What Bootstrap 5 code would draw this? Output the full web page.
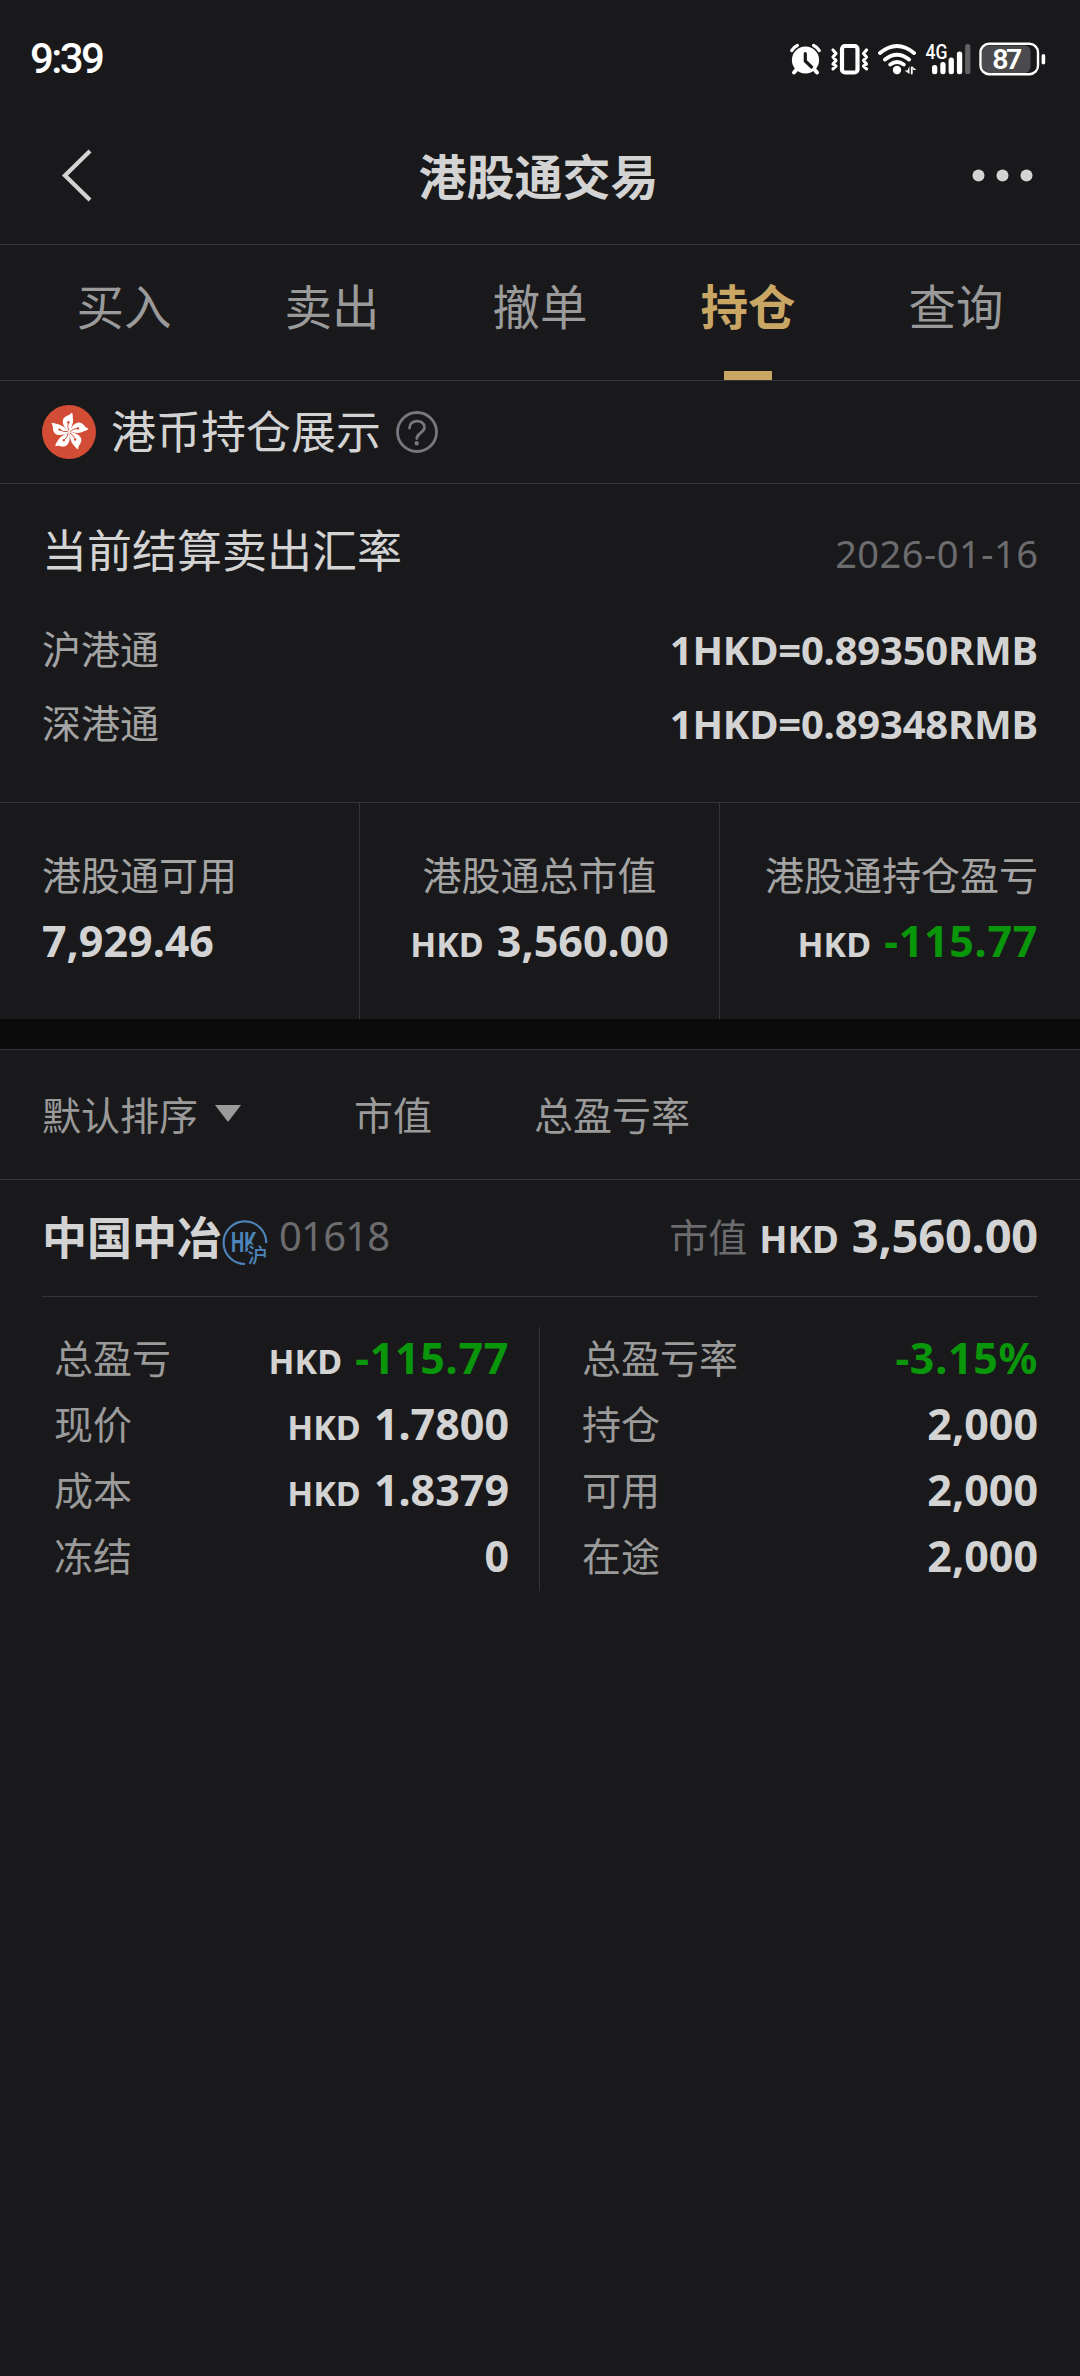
<!DOCTYPE html>
<html lang="zh-CN" data-bs-theme="dark">
<head>
<meta charset="utf-8">
<meta name="viewport" content="width=device-width, initial-scale=1">
<title>港股通交易</title>
<link href="https://cdn.jsdelivr.net/npm/bootstrap@5.3.0/dist/css/bootstrap.min.css" rel="stylesheet">
<style>
:root{--ink:#d3d3d3;--soft:#a3a4a3;--dim:#9a9a9a;--faint:#6c6c6e;--gold:#c9a664;--down:#0a960a;--rule:#343436}
body{background:#19191b;color:var(--ink);font-family:"Noto Sans CJK SC",sans-serif;font-size:39px;line-height:50px;white-space:nowrap}
h1,h2,h3{color:var(--ink)}
svg{display:block;flex:none}
.rule-b{border-bottom:1px solid var(--rule)}
.rule-t{border-top:1px solid var(--rule)}
.rule-r{border-right:1px solid var(--rule)}
.edge{padding-left:42px;padding-right:42px}
.soft{color:var(--soft)} .dim{color:var(--dim)} .faint{color:var(--faint)} .down{color:var(--down)}
.num{font-family:"Noto Sans","Noto Sans CJK SC",sans-serif;font-weight:700;font-size:43px;line-height:60px}
.num small{font-size:34px;font-weight:700;line-height:1;margin-right:2px}
.down{letter-spacing:.7px}

.status-bar{height:104px;padding:29px 34px 0 30px}
.clock{font-family:Roboto,sans-serif;font-weight:500;font-size:42px;letter-spacing:-2.6px;color:#fff;line-height:60px}
.status-icons{height:40px;margin-top:11px}

.title-bar{height:141px;padding:0 47px 0 60px}
.title-bar svg{margin-top:2px}
.title-bar .side{width:70px}
.title-bar h1{font-size:48px;font-weight:700;line-height:60px;padding-left:13px}

.tabs{height:136px;padding:30px 20px 0}
.tabs a{font-size:47.5px;line-height:60px;color:var(--dim);text-decoration:none}
.tabs a.active{color:var(--gold);font-weight:700}
.tabs a.active::after{content:"";width:48px;height:9px;margin-top:36px;background:var(--gold)}

.mode{height:103px}
.mode span{font-size:45px;margin:0 15px 0 15px;padding-bottom:5px}

.rates{height:319px;padding-top:35px}
.rates h2{font-size:45px;font-weight:400;line-height:60px}
.rates .date{font-family:"Noto Sans",sans-serif;font-size:38px;letter-spacing:.5px;padding-top:8px;margin-right:-.5px}
.rate-list{margin-top:31px}
.rate-list>div{height:74px}
.rate-list .num{font-size:40px;letter-spacing:-.2px;padding-top:5px}

.totals{height:216px}
.totals>div{width:360px;padding-top:45px}
.totals .num{margin-top:13px}

.band{height:30px;background:#0b0b0b}
.sorts{height:131px;padding-bottom:3px}
.sorts>div:nth-child(1){width:312px}
.sorts>div:nth-child(2){width:180px}
.caret{margin-left:17px}

.stock{margin:0 42px}
.stock-head{height:117px;padding-bottom:7px}
.stock-head h3{font-size:45px;font-weight:700;line-height:60px;padding-top:2px}
.stock-head .hk{margin-top:21px}
.stock-head .code{font-family:"Noto Sans",sans-serif;font-size:40px;letter-spacing:-.8px;margin-left:11px;padding-top:2px}
.stock-head .num{font-size:47px;letter-spacing:-.2px;padding-top:1px}
.stock-head .num small{font-size:37px;margin-right:1px}
.stock-head .cap{margin-right:12px}
.halves{margin-top:30px}
.grid-half{width:498px}
.grid-half>div{height:66px}
.grid-half>div>span:first-child{padding-bottom:9px}
.grid-half .num{padding-bottom:5px}
.half-l{padding:0 30px 0 12px}
.half-r{padding-left:42px}
</style>
</head>
<body>
<div class="status-bar d-flex justify-content-between align-items-start">
  <div class="clock">9:39</div>
  <div class="status-icons d-flex" aria-hidden="true">
    <svg width="40" height="40" viewBox="786 40 40 40" fill="none" stroke="#fff" stroke-linecap="round">
      <circle cx="805.5" cy="60" r="13.6" fill="#fff" stroke="none"/>
      <path d="M791.8 50.5q2-3.5 5.5-5M819.2 50.5q-2-3.5-5.5-5" stroke-width="3.4"/>
      <path d="M797 69l-3 3.500M814 69l3 3.500" stroke-width="4"/>
      <path d="M805.300 53.500v7.500l6.200 6" stroke="#19191b" stroke-width="3.200"/>
    </svg>
    <svg width="48" height="40" viewBox="826 40 48 40" fill="none" stroke="#fff" stroke-linecap="round" stroke-linejoin="round">
      <rect x="842" y="46" width="15.500" height="26.500" rx="3" stroke-width="4.200"/>
      <path d="M833 50l3 3.500-3 3.500 3 3.500-3 3.500 3 2-3 2.800M866.500 50l-3 3.500 3 3.500-3 3.500 3 3.500-3 2 3 2.800" stroke-width="3.200"/>
    </svg>
    <svg width="46" height="40" viewBox="874 40 46 40" fill="none" stroke="#fff" stroke-linecap="round">
      <circle cx="897" cy="70" r="4.200" fill="#fff" stroke="none"/>
      <path d="M880 53q17-14 34 0M885 59.500q12-9.500 24 0M890.300 64.500q6.700-5 13.400 0" stroke-width="3.900"/>
      <path d="M909.500 66v8l-5-3.500h3zM911.500 66l5 4h-3" fill="#fff" stroke="none"/>
      <path d="M911.800 67.500v6" stroke-width="1.800"/>
    </svg>
    <svg width="54" height="40" viewBox="920 40 54 40">
      <text x="925.500" y="59" font-family="Roboto,sans-serif" font-weight="500" font-size="20.500" textLength="22" lengthAdjust="spacingAndGlyphs" fill="#fff">4G</text>
      <g fill="#fff"><rect x="932" y="65" width="5.300" height="9.300" rx="2.500"/><rect x="940.300" y="62" width="5.300" height="12.300" rx="2.500"/><rect x="948.600" y="57.500" width="5.300" height="16.800" rx="2.500"/><rect x="956.900" y="51.500" width="5.300" height="22.800" rx="2.500"/></g>
      <rect x="965.100" y="44" width="5.300" height="30.300" rx="2.500" fill="#626264"/>
    </svg>
    <svg width="72" height="40" viewBox="974 40 72 40">
      <rect x="982" y="45.500" width="48.500" height="27.500" rx="6" fill="#4b4b4d"/>
      <rect x="980.500" y="43.800" width="57.500" height="30.400" rx="8.500" fill="none" stroke="#fff" stroke-width="2.400"/>
      <rect x="1041.600" y="54" width="3.600" height="10.500" rx="1.800" fill="#fff"/>
      <text x="1007.300" y="69" text-anchor="middle" font-family="Roboto,sans-serif" font-weight="600" font-size="28.500" textLength="30" fill="#fff">87</text>
    </svg>
  </div>
</div>

<header class="title-bar rule-b d-flex justify-content-between align-items-center">
  <div class="side"><svg width="34" height="54" viewBox="0 0 34 54" fill="none" stroke="#d3d3d3" stroke-width="4.200"><path d="M30 3L5 27.500 30 52"/></svg></div>
  <h1 class="m-0 ps-0">港股通交易</h1>
  <div class="side ms-3 d-flex justify-content-end"><svg width="62" height="14" viewBox="0 0 62 14" fill="#d3d3d3"><circle cx="7.500" cy="7.500" r="6"/><circle cx="31.500" cy="7.500" r="6"/><circle cx="55.500" cy="7.500" r="6"/></svg></div>
</header>

<nav class="tabs rule-b nav flex-nowrap nav-fill">
  <a class="col d-flex flex-column align-items-center" href="#">买入</a>
  <a class="col d-flex flex-column align-items-center" href="#">卖出</a>
  <a class="col d-flex flex-column align-items-center" href="#">撤单</a>
  <a class="col d-flex flex-column align-items-center active" href="#">持仓</a>
  <a class="col d-flex flex-column align-items-center" href="#">查询</a>
</nav>

<section class="mode edge rule-b d-flex align-items-center">
  <svg width="54" height="54" viewBox="-27 -27 54 54">
    <defs>
      <g id="petal">
        <path d="M0 0C-3.500-3-6.500-7-6.200-11-5.900-15-2.500-16-.5-16.800 1.200-17.500 2-18.500 2.800-19.500 4.300-17.500 3.500-15 4-12.500 4.500-9 2.500-5 0 0z" fill="#fff"/>
        <path d="M0-1.500Q-2-5-.8-9" fill="none" stroke="#d34c36" stroke-width=".9"/>
        <circle cx="-.6" cy="-9.700" r="1.200" fill="#d34c36"/>
      </g>
    </defs>
    <circle r="27" fill="#d34c36"/>
    <use href="#petal"/><use href="#petal" transform="rotate(72)"/><use href="#petal" transform="rotate(144)"/><use href="#petal" transform="rotate(216)"/><use href="#petal" transform="rotate(288)"/>
  </svg>
  <span>港币持仓展示</span>
  <svg width="42" height="42" viewBox="0 0 42 42" fill="none" stroke="#77777f" stroke-width="2.800" stroke-linecap="round"><circle cx="21" cy="21" r="19.500"/><path d="M13.500 17c0-9 15-9 15-.8 0 5.500-7.700 5.800-7.700 11.300"/><circle cx="20.700" cy="32.300" r="1.200" fill="#77777f" stroke-width="2"/></svg>
</section>

<section class="rates edge rule-b">
  <div class="d-flex justify-content-between align-items-center">
    <h2 class="m-0">当前结算卖出汇率</h2>
    <div class="date faint">2026-01-16</div>
  </div>
  <div class="rate-list">
    <div class="d-flex justify-content-between align-items-center"><span class="soft">沪港通</span><span class="num">1HKD=0.89350RMB</span></div>
    <div class="d-flex justify-content-between align-items-center"><span class="soft">深港通</span><span class="num">1HKD=0.89348RMB</span></div>
  </div>
</section>

<section class="totals d-flex">
  <div class="rule-r edge"><div class="soft">港股通可用</div><div class="num">7,929.46</div></div>
  <div class="rule-r text-center"><div class="soft">港股通总市值</div><div class="num"><small>HKD</small> 3,560.00</div></div>
  <div class="edge text-end"><div class="soft">港股通持仓盈亏</div><div class="num"><small>HKD</small> <span class="down">-115.77</span></div></div>
</section>

<div class="band"></div>

<section class="sorts edge rule-t rule-b d-flex align-items-center dim">
  <div class="d-flex align-items-center">默认排序<svg class="caret" width="26" height="17" viewBox="0 0 26 17"><path d="M0 0h26L13 17z" fill="#9a9a9a"/></svg></div>
  <div>市值</div>
  <div>总盈亏率</div>
</section>

<article class="stock">
  <div class="stock-head rule-b d-flex align-items-center">
    <h3 class="m-0">中国中冶</h3>
    <svg class="hk overflow-visible" width="46" height="50" viewBox="0 0 46 50">
      <path d="M23 44A21.300 21.300 0 1 1 44.200 23" fill="none" stroke="#4d84ba" stroke-width="2.200"/>
      <text x="9" y="31.500" font-family="Roboto,sans-serif" font-weight="700" font-size="27" textLength="25" lengthAdjust="spacingAndGlyphs" fill="#4d84ba">HK</text>
      <text x="25.500" y="43" font-family="Noto Sans CJK SC,sans-serif" font-weight="500" font-size="20" fill="#4d84ba" stroke="#19191b" stroke-width="3" paint-order="stroke">沪</text>
    </svg>
    <span class="code faint">01618</span>
    <span class="cap faint ms-auto">市值</span>
    <span class="num"><small>HKD</small> 3,560.00</span>
  </div>
  <div class="halves d-flex">
    <div class="grid-half half-l rule-r">
      <div class="d-flex justify-content-between align-items-center"><span class="dim">总盈亏</span><span class="num"><small>HKD</small> <span class="down">-115.77</span></span></div>
      <div class="d-flex justify-content-between align-items-center"><span class="dim">现价</span><span class="num"><small>HKD</small> 1.7800</span></div>
      <div class="d-flex justify-content-between align-items-center"><span class="dim">成本</span><span class="num"><small>HKD</small> 1.8379</span></div>
      <div class="d-flex justify-content-between align-items-center"><span class="dim">冻结</span><span class="num">0</span></div>
    </div>
    <div class="grid-half half-r">
      <div class="d-flex justify-content-between align-items-center"><span class="dim">总盈亏率</span><span class="num down">-3.15%</span></div>
      <div class="d-flex justify-content-between align-items-center"><span class="dim">持仓</span><span class="num">2,000</span></div>
      <div class="d-flex justify-content-between align-items-center"><span class="dim">可用</span><span class="num">2,000</span></div>
      <div class="d-flex justify-content-between align-items-center"><span class="dim">在途</span><span class="num">2,000</span></div>
    </div>
  </div>
</article>
<script src="https://cdn.jsdelivr.net/npm/bootstrap@5.3.0/dist/js/bootstrap.bundle.min.js"></script>
</body>
</html>
